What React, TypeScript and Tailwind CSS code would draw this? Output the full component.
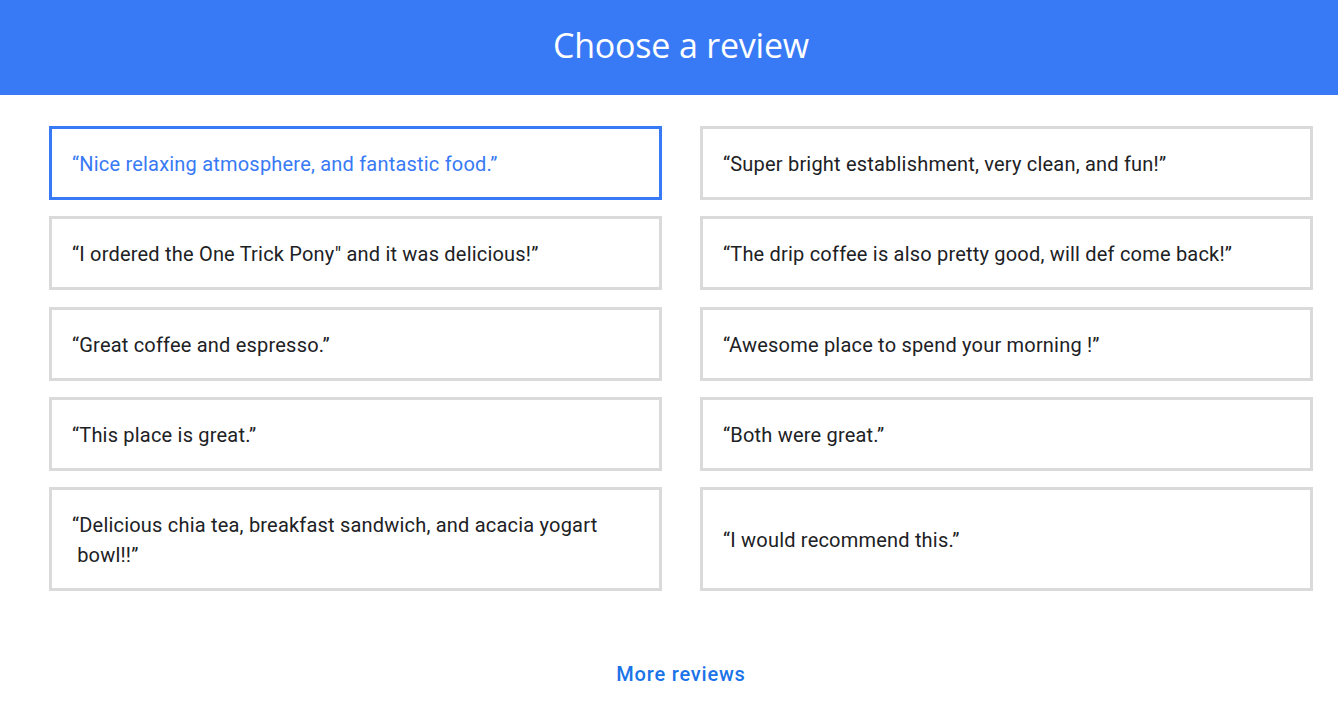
const reviews = [
  { id: 1, text: "\u201cNice relaxing atmosphere, and fantastic food.\u201d" },
  { id: 2, text: "\u201cSuper bright establishment, very clean, and fun!\u201d" },
  { id: 3, text: "\u201cI ordered the One Trick Pony\" and it was delicious!\u201d" },
  { id: 4, text: "\u201cThe drip coffee is also pretty good, will def come back!\u201d" },
  { id: 5, text: "\u201cGreat coffee and espresso.\u201d" },
  { id: 6, text: "\u201cAwesome place to spend your morning !\u201d" },
  { id: 7, text: "\u201cThis place is great.\u201d" },
  { id: 8, text: "\u201cBoth were great.\u201d" },
  { id: 9, text: "\u201cDelicious chia tea, breakfast sandwich, and acacia yogart \u00a0bowl!!\u201d" },
  { id: 10, text: "\u201cI would recommend this.\u201d" },
];

export default function App() {
  const selected = 1;

  return (
    <div className="min-h-[702px] bg-white font-['Roboto',sans-serif]">
      {/* header; content is centred a little right of the window middle, as in the shot */}
      <header className="flex h-[95px] items-center justify-center bg-[#387af5] pb-[5px] pl-[24px]">
        <h1 className="font-['Open_Sans',sans-serif] text-[34px] font-normal tracking-[-0.2px] text-white">
          Choose a review
        </h1>
      </header>

      <div className="grid grid-cols-2 gap-x-[38px] gap-y-[16.3px] pl-[49px] pr-[25px] pt-[31px]">
        {reviews.map((r) => (
          <button
            key={r.id}
            className={
              r.id === selected
                ? "flex items-center border-[3px] border-[#387af5] px-5 pb-[18px] pt-[20px] text-left text-[20px] leading-[30px] tracking-[0.2px] text-[#387af5]"
                : "flex items-center border-[3px] border-[#dadada] px-5 pb-[18px] pt-[20px] text-left text-[20px] leading-[30px] tracking-[0.2px] text-[#202124]"
            }
          >
            <span>{r.text}</span>
          </button>
        ))}
      </div>

      <div className="flex justify-center pl-[24px] pt-[68px]">
        <button className="text-[20px] font-medium tracking-[0.8px] text-[#1a73e8]">
          More reviews
        </button>
      </div>
    </div>
  );
}
